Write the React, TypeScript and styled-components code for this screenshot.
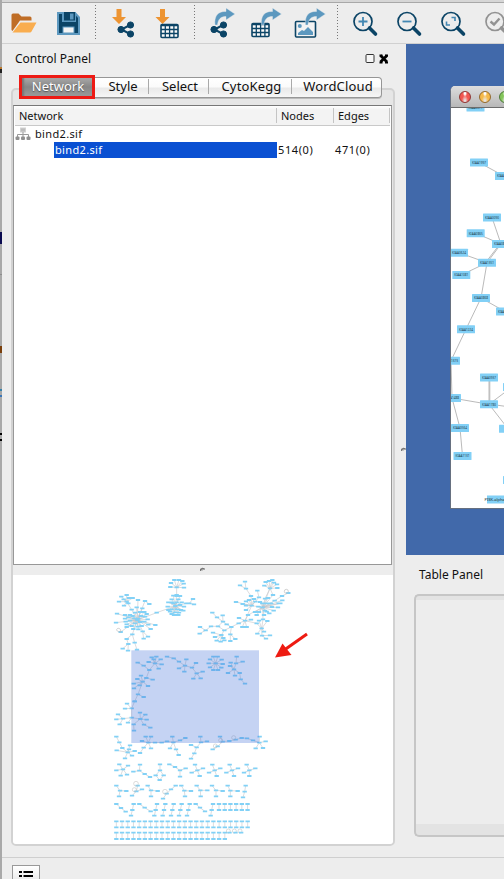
import React from "react";
import styled, { createGlobalStyle } from "styled-components";

const GlobalStyle = createGlobalStyle`
  * { box-sizing: border-box; }
  html, body { margin: 0; padding: 0; overflow: hidden; }
  body { font-family: "Noto Sans", "Open Sans", sans-serif; color: #111; background: #ededed; }
  svg { display: block; }
`;

const Screen = styled.div`
  width: 504px;
  height: 879px;
  display: flex;
  overflow: hidden;
  background: #ededed;
`;

const DesktopEdge = styled.div`
  width: 2px;
  flex: none;
  background: linear-gradient(
    #a9a9a9 0 67px, #b9782c 67px 69px, #222 69px 73px, #a9a9a9 73px 232px,
    #0b0b50 232px 244px, #a9a9a9 244px 274px, #8d8d8d 274px 275px, #a9a9a9 275px 346px,
    #7a3f0c 346px 353px, #a9a9a9 353px 389px, #3682ab 389px 391px, #a9a9a9 391px 395px,
    #3a76b8 395px 397px, #a9a9a9 397px 433px, #000 433px 435px, #a9a9a9 435px 439px,
    #000 439px 441px, #a9a9a9 441px
  );
`;

const Window = styled.div`
  width: 502px;
  flex: none;
  display: flex;
  flex-direction: column;
`;

const TitleEdge = styled.div`
  height: 3px;
  flex: none;
  background: #d6d6d6;
  border-bottom: 1px solid #a8a8a8;
`;

const Toolbar = styled.div`
  height: 41px;
  flex: none;
  border-bottom: 1px solid #d0d0d0;
`;

const Body = styled.div`
  height: 813px;
  flex: none;
  display: flex;
`;

const LeftColumn = styled.div`
  width: 398px;
  flex: none;
  display: flex;
  flex-direction: column;
`;

const PanelHeader = styled.div`
  height: 32px;
  flex: none;
  display: flex;
  align-items: center;
  justify-content: space-between;
  padding: 0 10px 3px 13px;
`;

const Label = styled.span<{ $size?: number; $spacing?: number }>`
  font-size: ${(p) => p.$size ?? 12}px;
  letter-spacing: ${(p) => p.$spacing ?? 0}px;
  line-height: 16px;
  white-space: nowrap;
`;

const TabbedPane = styled.div`
  position: relative;
  width: 384px;
  height: 769px;
  margin-left: 9px;
  padding-top: 29px;
  display: flex;
  flex-direction: column;
  &::before {
    content: "";
    position: absolute;
    inset: 12px 0 -1px 0;
    border: 2px solid #d2d2d2;
    border-radius: 5px;
    background: #e6e6e6;
  }
`;

const TabStrip = styled.div`
  position: absolute;
  left: 8px;
  top: -1px;
  height: 24px;
  display: flex;
  align-items: center;
`;

const Tab = styled.div<{ $width: number; $last?: boolean }>`
  width: ${(p) => p.$width}px;
  height: 21px;
  display: flex;
  align-items: center;
  justify-content: center;
  padding: 0 0 2px 3px;
  border: 1px solid #969696;
  border-width: 1px 0 1px 0;
  background: linear-gradient(#fff 0%, #fbfbfb 45%, #eaeaea 55%, #f6f6f6 100%);
  box-shadow: 0 1px 0 #bbb;
  ${(p) =>
    p.$last
      ? "border-right-width: 1px; border-radius: 0 4px 4px 0;"
      : "&::after { content: ''; width: 1px; height: 15px; background: #aaa; margin-left: auto; } & > span { margin-left: auto; }"}
`;

const ActiveTab = styled.div`
  width: 76px;
  height: 24px;
  display: flex;
  align-items: center;
  justify-content: center;
  padding: 0 0 2px 2px;
  border: 3px solid #ed1a14;
  background: linear-gradient(#a8a8a8, #868686 50%, #9a9a9a);
  box-shadow: inset 3px 0 2px -1px #777;
  color: #fff;
  text-shadow: 0 1px 1px #555;
`;

const TreeTable = styled.div`
  position: relative;
  width: 379px;
  height: 460px;
  margin-left: 2px;
  flex: none;
  border: 1px solid #989898;
  border-top-color: #777;
  background: #fff;
`;

const TableRow = styled.div<{ $head?: boolean }>`
  height: ${(p) => (p.$head ? 20 : 16)}px;
  display: grid;
  grid-template-columns: 263px 57px 57px;
  align-items: center;
  ${(p) =>
    p.$head &&
    "grid-template-columns: 262px 57px 56px; background: linear-gradient(#fff, #f3f3f3 20%, #f3f3f3); border-bottom: 1px solid #c9c9c9; margin: 0 1px;"}
`;

const HeadCell = styled.div`
  height: 15px;
  display: flex;
  align-items: center;
  padding-left: 4px;
  border-right: 1px solid #c4c4c4;
`;

const Cell = styled.div`
  height: 16px;
  display: flex;
  align-items: center;
  padding-left: 1px;
`;

const RootCell = styled(Cell)`
  gap: 4px;
  padding-left: 1px;
`;

const SelectedCell = styled(Cell)`
  margin-left: 40px;
  background: #0a50d2;
  color: #fff;
`;

const SplitHandle = styled.div`
  position: relative;
  width: 380px;
  height: 10px;
  margin-left: 2px;
  flex: none;
  background: #ededed;
  display: flex;
  align-items: center;
  justify-content: center;
`;

const Overview = styled.div`
  position: relative;
  width: 380px;
  height: 269px;
  margin-left: 2px;
  flex: none;
  background: #fff;
  border-radius: 0 0 3px 3px;
  overflow: hidden;
`;

const Divider = styled.div`
  width: 6px;
  flex: none;
  height: 813px;
  padding: 403px 0 0 1px;
`;

const RightColumn = styled.div`
  width: 98px;
  flex: none;
  display: flex;
  flex-direction: column;
`;

const Desktop = styled.div`
  height: 511px;
  flex: none;
  padding: 42px 0 0 44px;
  background: #4169aa;
`;

const NetWindow = styled.div`
  width: 60px;
  height: 423px;
  border: 1px solid #667080;
  border-top: 0;
  border-radius: 5px 0 0 0;
  background: #fff;
  overflow: hidden;
`;

const NetTitle = styled.div`
  height: 22px;
  display: flex;
  align-items: center;
  gap: 8px;
  padding-left: 8px;
  background: linear-gradient(#dedede, #b8b8b8);
  border-bottom: 1px solid #6c6c6c;
`;

const Light = styled.div<{ $color: string; $edge: string }>`
  width: 12px;
  height: 12px;
  flex: none;
  border-radius: 50%;
  border: 1px solid ${(p) => p.$edge};
  background: radial-gradient(ellipse at 50% 12%, #fff 0 10%, transparent 30%),
    radial-gradient(ellipse at 50% 90%, #fff9 0 6%, ${(p) => p.$color} 45%);
`;

const TableTitle = styled.div`
  height: 39px;
  flex: none;
  padding: 7px 0 0 13px;
`;

const TableFrame = styled.div`
  width: 100px;
  height: 243px;
  margin-left: 8px;
  border: 2px solid #c6c6c6;
  border-right: 0;
  border-radius: 5px 0 0 5px;
  background: linear-gradient(#e3e3e3 0 4px, #ededed 4px 228px, #e3e3e3 228px);
`;

const StatusBar = styled.div`
  height: 22px;
  flex: none;
  border-top: 1px solid #cfcfcf;
  padding: 7px 0 0 10px;
`;

const ListButton = styled.div`
  width: 28px;
  height: 20px;
  display: flex;
  justify-content: center;
  padding-top: 4px;
  border: 1px solid #999;
  background: linear-gradient(#fff, #e6e6e6);
`;

const NAVY = "#0b4466";
const STEEL = "#5c98bf";
const ORANGE = "#ed9432";

const Share = () => (
  <g fill={NAVY} stroke={NAVY}>
    <path d="M12.5 3.5 L4 8 L12.5 12.5" fill="none" strokeWidth="2" />
    <circle cx="13" cy="3.5" r="3.1" />
    <circle cx="3.5" cy="8" r="3.1" />
    <circle cx="13" cy="12.5" r="3.1" />
  </g>
);

const Grid = () => (
  <g>
    <rect x="1" y="1" width="17" height="13" rx="1" fill="#fafafa" stroke={NAVY} strokeWidth="1.6" />
    <path d="M1 2.2H18M1 6H18M1 10H18M5.3 2V14M9.6 2V14M13.9 2V14" stroke={NAVY} strokeWidth="1.3" />
  </g>
);

const DownArrow = () => <path d="M4.500 0H9.500V8H14L7 15L0 8H4.500Z" fill={ORANGE} />;

const CurveArrow = () => (
  <path d="M0 17C-1 8 3 3 11 3.500V0L20 6L11 12V8.500C6 8.500 3 11 2.500 17Z" fill={STEEL} stroke="#ededed" strokeWidth=".4" />
);

const Lens = ({ color = NAVY, children }: { color?: string; children: React.ReactNode }) => (
  <g>
    <circle cx="10" cy="10" r="9" fill="none" stroke={color} strokeWidth="1.7" />
    <path d="M16.500 16.500L22.500 22.500" stroke={color} strokeWidth="3.6" strokeLinecap="round" />
    {children}
  </g>
);

const ToolbarIcons = () => (
  <svg width="502" height="40" viewBox="2 3 502 40">
    <path d="M11.500 30V15Q11.500 13.500 13 13.500H18.500L21.500 16.500H30Q31.500 16.500 31.500 18V20.500H20L12.500 31Z" fill="#bf6d26" />
    <path d="M20.500 22.500H36.500L31.500 31.500Q31 32.500 30 32.500H12.500Z" fill="#f9ad4f" />
    <path d="M58 13H75L79 17.500V34H58Z" fill={NAVY} stroke={STEEL} strokeWidth="2" />
    <path d="M62 12V22H76V12Z" fill={STEEL} />
    <path d="M64 12H75V20.500H64Z" fill={NAVY} />
    <rect x="70" y="13.500" width="3.500" height="6" fill={STEEL} />
    <rect x="63" y="27" width="11" height="6" fill="#f4f4f4" stroke={STEEL} />
    <path d="M95.500 5V40M194.500 5V40M337.500 5V40" stroke="#777" strokeDasharray="1 2" />
    <g transform="translate(112 9)"><DownArrow /></g>
    <g transform="translate(117.500 21.500)"><Share /></g>
    <g transform="translate(155.500 9)"><DownArrow /></g>
    <g transform="translate(160 23.500)"><Grid /></g>
    <g transform="translate(210.500 21.500)"><Share /></g>
    <g transform="translate(215 8)"><CurveArrow /></g>
    <g transform="translate(251 22.500)"><Grid /></g>
    <g transform="translate(261.500 8)"><CurveArrow /></g>
    <rect x="295.500" y="21.500" width="20" height="15.500" rx="1" fill="#f3f3f3" stroke={NAVY} strokeWidth="1.600" />
    <circle cx="299.800" cy="26" r="2" fill={STEEL} />
    <path d="M298 35V33L302 30L304 31L308 27L313 32V35Z" fill={STEEL} />
    <g transform="translate(305.500 8)"><CurveArrow /></g>
    <g transform="translate(353 11.500)">
      <Lens><path d="M5.500 10H14.500M10 5.500V14.500" stroke="#4387b2" strokeWidth="1.800" /></Lens>
    </g>
    <g transform="translate(397 11.500)">
      <Lens><path d="M5.500 10H14.500" stroke="#4387b2" strokeWidth="1.800" /></Lens>
    </g>
    <g transform="translate(441 11.500)">
      <Lens><path d="M10.500 6H14V9.500M5.500 10V13.500H9" fill="none" stroke="#4387b2" strokeWidth="1.600" /></Lens>
    </g>
    <g transform="translate(485 11.500)">
      <Lens color="#929292"><path d="M5.500 10L9 13L14.500 7" fill="none" stroke="#929292" strokeWidth="2.400" /></Lens>
    </g>
  </svg>
);

type Point = [number, number];

const parse = (line: string): Point[] =>
  line.trim().split(/\s+/).map((pair) => pair.split(",").map(Number) as Point);

/* Each star string lists a hub followed by its neighbours. */
const upperLeft = `
97,150 99,90 120,93 95,112 112,115 80,119 36,131 33,158 60,135 75,135 90,128 105,126 118,126 125,132 60,146 70,142 83,138 108,138 120,140 128,148 62,155 75,152 90,160 105,156 118,155 65,163 80,168 98,170 110,168 130,164 151,165 137,177 65,171 85,177 100,178 113,184 82,193 155,128 47,186 88,145 100,146
120,93 133,102
65,95 49,80 65,75 42,95 56,88 72,84 83,84 57,107 70,100 80,119
82,193 65,207 89,218
70,222 65,207 53,236 69,242
89,218 96,239
113,184 116,206 129,200
215,52 208,30 222,30 232,33 198,39 236,41 196,51 237,53 215,78
211,108 205,77 215,75 225,78 200,88 220,88 190,97 200,97 215,97 230,97 188,110 190,120 205,100 225,105 237,110 200,118 215,118 228,120 195,125 235,122 210,127 222,128 207,135 220,135 200,132 244,100 155,128
253,100 244,100 264,87 267,103
150,280 140,262 154,260 167,268 146,268 131,276 170,283 161,296 133,300
116,287 133,300 98,278
124,324 133,300 143,329 113,335
113,335 97,327 108,317 86,341 104,346 129,348 87,355 99,373
99,373 116,381 89,394
206,265 186,260 222,275
240,287 222,275 244,268 222,295 238,305 261,293
261,293 273,279 275,310
275,310 293,305 265,326 287,325`;

const upperRight = `
153,56 150,35 135,46 168,78
225,55 212,36 222,33 232,30 237,38 246,43 208,47 247,54 234,75 203,112 210,86
261,78 280,69 239,92
187,62 192,82
170,107 123,96 143,102 153,94 162,90 177,87 153,107 153,120 168,78 181,95 192,82 150,152
203,112 195,96 202,100 215,100 210,86 219,84 228,100 239,92 251,100 262,91 249,112 231,111 210,122 236,122 223,130 192,126 180,126 185,135 159,135 207,135 215,125 190,110 170,107 234,75 256,100 204,148
150,152 159,135 132,144 131,160 142,171 155,171 168,149 185,160
200,175 185,160 204,148 217,153 187,191 207,185 201,197 192,152
201,197 213,206 225,196
109,171 131,160 95,163 88,181 106,193
84,155 95,163 66,142 83,136 69,169
66,142 52,128
48,169 69,169 32,181
32,181 15,171 14,191
88,181 69,169 79,195
79,195 54,188 60,201 85,204 65,212 88,211 77,215
106,193 121,207 106,213
62,280 55,260 68,260 45,268 80,269 41,280 83,282 45,292 79,293 55,300 69,300
117,298 107,278 105,288 123,280 120,317 99,309 134,309
123,280 125,260 143,275
137,328 134,309 150,341`;

const lower = `
80,40 66,26 60,41 89,19 80,68
54,71 80,68 39,58 34,73 44,88
69,83 80,68
106,72 80,68 105,53 121,59 125,74 117,89 86,88
117,89 136,98
86,88 87,107
43,142 34,125 52,159
68,172 52,159 35,166 75,151 89,168 60,190 81,182 72,163
130,143 122,125 138,125 111,138 150,143 116,158 138,160
116,158 105,174
205,142 202,125 186,139 225,136 195,160 213,163
170,143 150,143 186,139
225,136 241,129
213,163 221,180
275,157 258,150 288,142 268,175
288,142 286,125 306,139
268,175 258,191
353,140 345,125 373,138 338,154
338,154 323,163
392,134 373,138 410,129
426,130 410,129 444,136
463,143 444,136 464,125 482,139 452,160 474,159
54,223 43,208 69,212 34,226 47,242 66,239
103,227 105,209 85,230 119,237
119,237 135,246
165,226 165,208 152,241 176,241
164,255 152,241 176,241
210,216 193,208 225,226
225,226 242,220 225,245
277,226 270,209 294,220 260,233 284,243
329,226 322,209 346,220 312,233 335,243
381,226 374,209 399,220 364,233 387,243
433,226 425,209 451,220 417,233 433,243
45,287 34,272 64,288 42,304
94,289 98,272 111,283 81,302
138,286 128,272 158,288 138,304
185,296 198,283 174,311
198,283 212,272
238,287 229,272 258,288 240,304
286,286 275,272 307,286 287,304
333,286 321,272 353,288 333,304
376,287 368,272 398,288 376,304
419,290 422,272 414,307
48,339 34,327 62,350
82,345 86,327 78,362
119,338 103,327 137,349
152,345 156,327 148,362
177,345 181,327 173,362
202,345 206,327 198,362
226,345 230,327 222,362
250,345 254,327 246,362
285,338 272,327 300,349
320,345 324,327 317,362`;

const pairRow = (x: number, count: number, top: number, bottom: number) =>
  Array.from({ length: count }, (_, i) => {
    const px = x + i * 17.13;
    return `${px},${top} ${px},${bottom}`;
  }).join("\n");

const pairs = [pairRow(342, 6, 327, 345), pairRow(34, 24, 379, 397), pairRow(34, 20, 413, 432)].join("\n");

const Stars = ({ data }: { data: string }) => {
  const stars = data.trim().split("\n").map(parse);
  return (
    <>
      <path
        d={stars.map(([hub, ...rest]) => rest.map((p) => `M${hub}L${p}`).join("")).join("")}
        stroke="#c4c4c8"
        strokeWidth="1.800"
      />
      <path
        d={stars.flat().map(([x, y]) => `M${x - 6.500} ${y}h13`).join("")}
        stroke="#82d1f6"
        strokeWidth="5.500"
      />
    </>
  );
};

const OverviewMap = () => (
  <svg width="380" height="269" viewBox="13 575 380 269">
    <g transform="translate(105 570) scale(.33333)">
      <Stars data={upperLeft} />
      <path d="M47 186C32 186 32 174 42 175Q49 177 47 186" fill="none" stroke="#bbb" strokeWidth="2" />
    </g>
    <g transform="translate(195 570) scale(.33333)">
      <Stars data={upperRight} />
      <circle cx="274" cy="64" r="6" fill="none" stroke="#bbb" strokeWidth="2" />
    </g>
    <g transform="translate(105 695) scale(.33333)">
      <Stars data={lower} />
      <Stars data={pairs} />
      <g fill="none" stroke="#bbb" strokeWidth="1.500">
        <circle cx="93" cy="266" r="7" />
        <circle cx="88" cy="284" r="6" />
        <circle cx="180" cy="290" r="7" />
        <circle cx="331" cy="153" r="6" />
        <circle cx="347" cy="136" r="6" />
        <circle cx="386" cy="128" r="6" />
        <circle cx="370" cy="408" r="6" />
        <circle cx="388" cy="408" r="6" />
        <circle cx="405" cy="408" r="6" />
      </g>
      <path d="M367 413h13M385 413h13M402 413h13" stroke="#82d1f6" strokeWidth="5.500" />
    </g>
    <rect x="131.300" y="650.300" width="127.700" height="92.700" fill="#3e6cd7" fillOpacity=".3" />
    <path d="M307 634L285 649.500" stroke="#ee1b12" strokeWidth="3" />
    <path d="M275 657.500L282.500 643.500L291.500 655Z" fill="#ee1b12" />
  </svg>
);

const netNodes: [number, number, string][] = [
  [475.500, 107.500, "KIAA0071"],
  [479, 162.500, "KIAA1997"],
  [504, 176, "KIAA1001"],
  [492, 217.500, "KIAA0090"],
  [475.700, 233.200, "KIAA0865"],
  [501, 244, "KIAA0808"],
  [459, 252.700, "KIAA0624"],
  [487, 262.700, "KIAA1351"],
  [461.300, 275, "KIAA1081"],
  [481, 298, "KIAA0868"],
  [505, 311.500, "KIAA0444"],
  [466, 329.200, "KIAA1224"],
  [451, 360.700, "KIAA1373"],
  [489, 377.500, "KIAA0937"],
  [452, 398, "KIAA1488"],
  [489, 404.300, "KIAA1780"],
  [460, 428, "KIAA0564"],
  [508, 428.700, ""],
  [462.500, 456, "KIAA1131"],
  [512, 387, ""],
  [512, 480, ""],
];

const netEdges: [number, number][] = [
  [1, 2], [3, 5], [4, 5], [5, 7], [6, 7], [7, 8], [7, 9], [9, 10], [9, 11], [11, 12],
  [12, 14], [13, 15], [14, 15], [14, 16], [15, 17], [16, 18], [15, 19],
];

const NetworkCanvas = () => (
  <svg width="53" height="400" viewBox="451 108 53 400">
    <g stroke="#b2b2b2" strokeWidth=".9">
      {netEdges.map(([a, b]) => (
        <line key={`${a}-${b}`} x1={netNodes[a][0]} y1={netNodes[a][1]} x2={netNodes[b][0]} y2={netNodes[b][1]} />
      ))}
      <line x1="486" y1="262" x2="503" y2="240" />
      <line x1="489" y1="404" x2="510" y2="407" />
      <line x1="489.800" y1="378" x2="489.800" y2="404" />
    </g>
    {netNodes.map(([x, y, name]) => (
      <g key={`${x}-${y}`}>
        <rect x={x - 9} y={y - 4} width="18" height="8" rx=".5" fill="#82d0f6" />
        {name && (
          <text x={x} y={y + 1.300} fontSize="3.400" textAnchor="middle" textLength="14" lengthAdjust="spacingAndGlyphs" fill="#1d3b4a">
            {name}
          </text>
        )}
      </g>
    ))}
    <rect x="487" y="495.500" width="20" height="8" fill="#82d0f6" />
    <text x="484.500" y="500.800" fontSize="4" fill="#222">PI3K-alpha-Y</text>
  </svg>
);

const WindowButtons = () => (
  <svg width="29" height="14" viewBox="0 0 29 14">
    <rect x="5" y="2.500" width="8" height="8" rx="1" fill="#f6f6f6" stroke="#333" />
    <path d="M19.500 3.500L26 10M26 3.500L19.500 10" stroke="#000" strokeWidth="2.800" />
    <path d="M18.500 3.500h3M24 3.500h3M18.500 10.500h3M24 10.500h3" stroke="#000" strokeWidth="1.800" />
  </svg>
);

const HierarchyIcon = () => (
  <svg width="16" height="14" viewBox="0 0 16 14">
    <rect x="5.500" y="1" width="5" height="4" fill="#bcbcbc" stroke="#d2d2d2" />
    <path d="M8 5V10M2.500 10V7.500H13.500V10" fill="none" stroke="#999" />
    <g fill="#909090">
      <rect x=".5" y="9.500" width="4" height="3.500" rx="1" />
      <rect x="6" y="9.500" width="4" height="3.500" rx="1" />
      <rect x="11.500" y="9.500" width="4" height="3.500" rx="1" />
    </g>
  </svg>
);

const Grip = () => (
  <svg width="6" height="6" viewBox="0 0 6 6">
    <path d="M.5 4V2.500L2 1.500V3.500M2 1.500H4V3" fill="none" stroke="#777" strokeWidth="1.200" />
  </svg>
);

const tabs = [
  { name: "Style", width: 54, spacing: 0 },
  { name: "Select", width: 60, spacing: 0 },
  { name: "CytoKegg", width: 83, spacing: 0.15 },
  { name: "WordCloud", width: 90, spacing: 0.15 },
];

export default function App() {
  return (
    <>
      <GlobalStyle />
      <Screen>
        <DesktopEdge />
        <Window>
          <TitleEdge />
          <Toolbar><ToolbarIcons /></Toolbar>
          <Body>
            <LeftColumn>
              <PanelHeader>
                <Label>Control Panel</Label>
                <WindowButtons />
              </PanelHeader>
              <TabbedPane>
                <TreeTable>
                  <TableRow $head>
                    <HeadCell><Label $size={11}>Network</Label></HeadCell>
                    <HeadCell><Label $size={11}>Nodes</Label></HeadCell>
                    <HeadCell><Label $size={11}>Edges</Label></HeadCell>
                  </TableRow>
                  <TableRow>
                    <RootCell><HierarchyIcon /><Label $size={11} $spacing={0.35}>bind2.sif</Label></RootCell>
                  </TableRow>
                  <TableRow>
                    <SelectedCell><Label $size={11} $spacing={0.35}>bind2.sif</Label></SelectedCell>
                    <Cell><Label $size={11} $spacing={0.6}>514(0)</Label></Cell>
                    <Cell><Label $size={11} $spacing={0.6}>471(0)</Label></Cell>
                  </TableRow>
                </TreeTable>
                <SplitHandle><Grip /></SplitHandle>
                <Overview><OverviewMap /></Overview>
                <TabStrip>
                  <ActiveTab><Label $size={13}>Network</Label></ActiveTab>
                  {tabs.map((tab, i) => (
                    <Tab key={tab.name} $width={tab.width} $last={i === tabs.length - 1}>
                      <Label $size={13} $spacing={tab.spacing}>{tab.name}</Label>
                    </Tab>
                  ))}
                </TabStrip>
              </TabbedPane>
            </LeftColumn>
            <Divider><Grip /></Divider>
            <RightColumn>
              <Desktop>
                <NetWindow>
                  <NetTitle>
                    <Light $color="#f25650" $edge="#913633" />
                    <Light $color="#f6b948" $edge="#94692b" />
                    <Light $color="#83c55a" $edge="#4b7838" />
                  </NetTitle>
                  <NetworkCanvas />
                </NetWindow>
              </Desktop>
              <TableTitle><Label>Table Panel</Label></TableTitle>
              <TableFrame />
            </RightColumn>
          </Body>
          <StatusBar>
            <ListButton>
              <svg width="14" height="14" viewBox="0 0 14 14">
                <path d="M0 2H3M4.500 2H14M0 6H3M4.500 6H14M0 10H3M4.500 10H14" stroke="#000" strokeWidth="2" />
              </svg>
            </ListButton>
          </StatusBar>
        </Window>
      </Screen>
    </>
  );
}
